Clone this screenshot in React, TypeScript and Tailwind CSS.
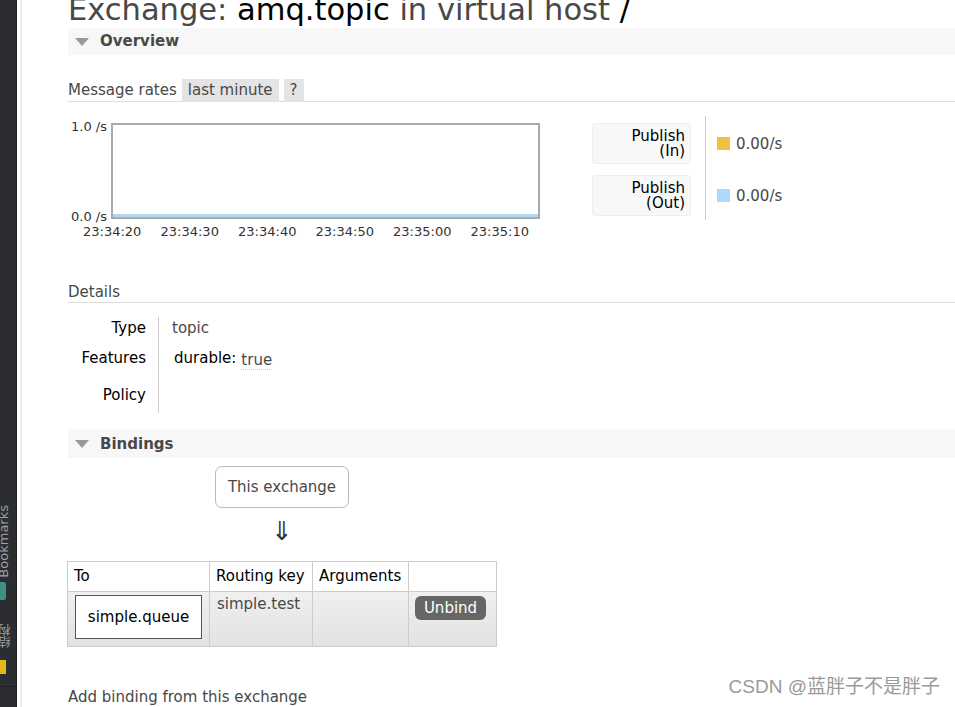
import React from "react"

const font = { fontFamily: '"DejaVu Sans", Verdana, sans-serif' }

function SectionHeader({ title }: { title: string }) {
  return (
    <div className="flex h-[29px] items-center bg-[#f7f7f7]">
      <svg width="14" height="8" viewBox="0 0 14 8" className="ml-[7px]">
        <polygon points="0,0 14,0 7,8" fill="#999" />
      </svg>
      <span className="ml-[11px] text-[15px] font-bold text-[#484848]">{title}</span>
    </div>
  )
}

function PublishBox({ label, sub }: { label: string; sub: string }) {
  return (
    <div className="flex h-[41px] w-[99px] flex-col items-end justify-center rounded-[3px] border border-[#eee] bg-[#f8f8f8] pr-[5px] text-[15px] leading-[15px] text-black">
      <span>{label}</span>
      <span>{sub}</span>
    </div>
  )
}

export default function App() {
  const ticks = ["23:34:20", "23:34:30", "23:34:40", "23:34:50", "23:35:00", "23:35:10"]
  return (
    <div className="flex h-[707px] w-[955px] overflow-hidden bg-white" style={font}>
      {/* IDE sidebar strip */}
      <div className="relative w-[17px] shrink-0 overflow-hidden border-r border-[#1e1f22] bg-[#2b2d30]">
        <span
          className="absolute left-[-6px] top-[505px] text-[13px] text-[#9aa0a6]"
          style={{ writingMode: "vertical-rl", transform: "rotate(180deg)" }}
        >
          Bookmarks
        </span>
        <div className="absolute left-0 top-[582px] h-[18px] w-[6px] rounded-r-[2px] bg-[#3f8f84]" />
        <span
          className="absolute left-[-4px] top-[624px] text-[12px] text-[#9aa0a6]"
          style={{ writingMode: "vertical-rl", transform: "rotate(180deg)", fontFamily: '"Noto Sans CJK SC", sans-serif' }}
        >
          结构
        </span>
        <div className="absolute left-0 top-[660px] h-[14px] w-[6px] bg-[#e5b719]" />
        <div className="absolute left-0 top-[686px] h-px w-[16px] bg-[#1e1f22]" />
      </div>
      <div className="w-[3px] shrink-0 bg-white" />
      <div className="w-[2px] shrink-0 bg-[#ebebeb]" />

      <div className="flex min-w-0 flex-1 flex-col pl-[46px] text-[15px] text-[#484848]">
        <h1 className="-mt-[8px] h-[36px] whitespace-nowrap text-[30.5px] leading-[36px] text-[#484848]">
          Exchange: <span className="text-black">amq.topic</span> in virtual host <span className="text-black">/</span>
        </h1>

        <SectionHeader title="Overview" />

        <div className="mt-[24px] flex h-[23px] items-center border-b border-[#ddd]">
          <span className="mr-[5px]">Message rates</span>
          <span className="flex h-[23px] items-center bg-[#e4e4e4] px-[6px]">last minute</span>
          <span className="ml-[5px] flex h-[23px] items-center bg-[#e4e4e4] px-[6px]">?</span>
        </div>

        <div className="mt-[14px] flex">
          <div className="w-[472px]">
            <div className="flex">
              <div className="flex w-[43px] flex-col items-end pr-[4px] text-[13px] leading-[13px] text-[#333]">
                <span className="mt-[4px]">1.0 /s</span>
                <span className="mt-[77px]">0.0 /s</span>
              </div>
              <div className="relative mt-[7px] h-[96px] w-[429px] border-2 border-[#aaa] bg-white">
                <div className="absolute bottom-0 left-0 right-0 h-[3px] bg-[#b0d8f5]" />
              </div>
            </div>
            <div className="ml-[15px] mt-[1px] flex w-[446px] justify-between text-[13px] leading-[16px] text-[#333]">
              {ticks.map((t) => (
                <span key={t}>{t}</span>
              ))}
            </div>
          </div>

          <div className="ml-[52px] flex flex-col gap-[11px] pt-[7px]">
            <PublishBox label="Publish" sub="(In)" />
            <PublishBox label="Publish" sub="(Out)" />
          </div>
          <div className="ml-[14px] h-[104px] w-px bg-[#ccc]" />
          <div className="ml-[11px] flex flex-col pt-[19px]">
            <div className="flex h-[17px] items-center gap-[6px]">
              <span className="h-[13px] w-[13px] bg-[#edc240]" />
              <span>0.00/s</span>
            </div>
            <div className="mt-[35px] flex h-[17px] items-center gap-[6px]">
              <span className="h-[13px] w-[13px] bg-[#afd8f8]" />
              <span>0.00/s</span>
            </div>
          </div>
        </div>

        <div className="mt-[42px] border-b border-[#ddd] leading-[20px]">Details</div>

        <div className="mt-[14px] flex">
          <div className="flex w-[78px] flex-col items-end text-black">
            <span className="mt-[2px] leading-[18px]">Type</span>
            <span className="mt-[12px] leading-[18px]">Features</span>
            <span className="mt-[19px] leading-[18px]">Policy</span>
          </div>
          <div className="ml-[12px] h-[96px] w-px bg-[#ccc]" />
          <div className="ml-[13px] flex flex-col">
            <span className="mt-[2px] leading-[18px]">topic</span>
            <span className="mt-[12px] flex leading-[18px]">
              <span className="ml-[2px] text-black">durable:</span>
              <span className="ml-[5px] mt-[2px] border-b border-dotted border-[#ccc]">true</span>
            </span>
          </div>
        </div>

        <div className="mt-[16px]">
          <SectionHeader title="Bindings" />
        </div>

        <div className="ml-[147px] mt-[8px] flex h-[44px] w-[134px] items-center justify-center rounded-[7px] border border-[#bbb]">
          This exchange
        </div>
        <div className="ml-[147px] flex h-[56px] w-[134px] items-start justify-center pt-[8px] text-[26px] leading-[30px] text-[#333]">⇓</div>

        <table className="-ml-px w-[430px] border-collapse border border-[#ccc] text-[15px]">
          <thead>
            <tr className="h-[30px] text-left text-black">
              <th className="w-[141px] border border-[#ccc] px-[6px] font-normal">To</th>
              <th className="w-[103px] border border-[#ccc] px-[6px] font-normal">Routing key</th>
              <th className="w-[96px] border border-[#ccc] px-[6px] font-normal">Arguments</th>
              <th className="border border-[#ccc] font-normal"></th>
            </tr>
          </thead>
          <tbody>
            <tr className="h-[55px] bg-gradient-to-b from-[#f0f0f0] to-[#e2e2e2] align-top">
              <td className="border border-[#ccc] px-[7px] pt-[3px]">
                <div className="flex h-[44px] w-[127px] items-center justify-center border border-[#555] bg-white text-black">
                  simple.queue
                </div>
              </td>
              <td className="border border-[#ccc] px-[7px] pt-[3px] leading-[18px]">simple.test</td>
              <td className="border border-[#ccc]"></td>
              <td className="border border-[#ccc] px-[6px] pt-[4px]">
                <span className="flex h-[24px] w-[71px] items-center justify-center rounded-[6px] bg-[#666] text-white">Unbind</span>
              </td>
            </tr>
          </tbody>
        </table>

        <div className="relative mt-[40px] leading-[20px]">
          Add binding from this exchange
          <span
            className="absolute right-[15px] top-[-11px] text-[19px] leading-[22px] text-[#9a9a9a]"
            style={{ fontFamily: '"Liberation Sans", "Noto Sans CJK SC", sans-serif' }}
          >
            CSDN @蓝胖子不是胖子
          </span>
        </div>
      </div>
    </div>
  )
}
